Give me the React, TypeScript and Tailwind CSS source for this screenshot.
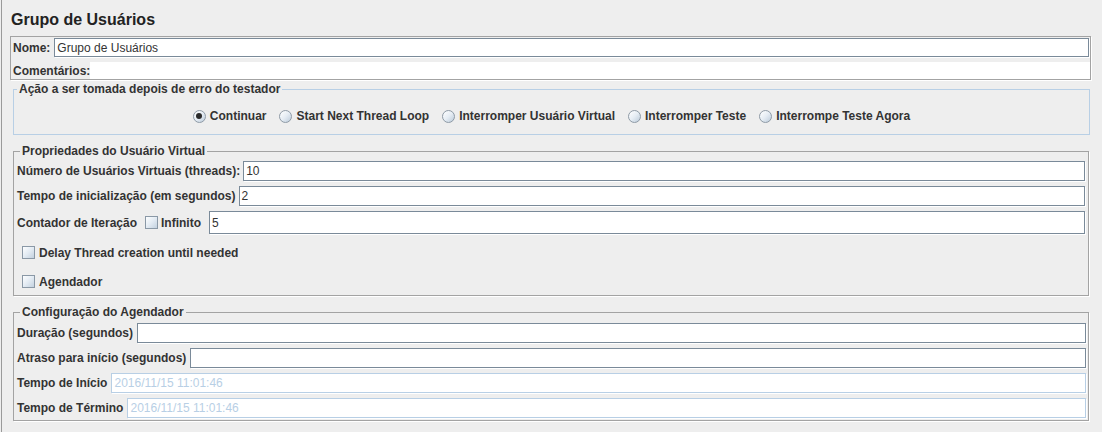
import React from "react";

function Field({ value = "", disabled = false, className = "" }: { value?: string; disabled?: boolean; className?: string }) {
  return (
    <div
      className={
        "flex-1 bg-white border flex items-center pl-[2px] font-normal text-[12px] leading-none " +
        (disabled
          ? "border-[#b8cfe5] text-[#b8cfe5] shadow-[1px_1px_0_#ffffff] "
          : "border-[#7a8a99] text-[#333333] shadow-[1px_1px_0_#ffffff] ") +
        className
      }
    >
      {value}
    </div>
  );
}

function Check() {
  return (
    <div className="w-[13px] h-[13px] shrink-0 border border-[#8a98a6] bg-gradient-to-br from-[#fdfeff] via-[#e3ebf3] to-[#c3d1df]" />
  );
}

function Radio({ checked = false }: { checked?: boolean }) {
  return (
    <div className="w-[13px] h-[13px] shrink-0 rounded-full border border-[#8e9aa6] bg-gradient-to-br from-[#ffffff] via-[#e6edf4] to-[#bccbda] flex items-center justify-center">
      {checked && <div className="w-[6px] h-[6px] rounded-full bg-[#2b2b2b]" />}
    </div>
  );
}

function RadioItem({ label, checked = false }: { label: string; checked?: boolean }) {
  return (
    <div className="flex items-center gap-[4px]">
      <Radio checked={checked} />
      <span>{label}</span>
    </div>
  );
}

function Row({ label, value, disabled = false, h = "h-[20px]", gap = "gap-[3px]" }: { label: React.ReactNode; value?: string; disabled?: boolean; h?: string; gap?: string }) {
  return (
    <div className={"flex items-stretch " + gap + " " + h}>
      <div className="flex items-center whitespace-nowrap">{label}</div>
      <Field value={value} disabled={disabled} />
    </div>
  );
}

export default function App() {
  return (
    <div className="w-[1102px] h-[432px] bg-[#eeeeee] font-['Liberation_Sans',Arial,sans-serif] text-[12px] font-bold text-[#333333] overflow-hidden">
      <div className="h-full ml-[1px] border-l border-[#9a9a9a] pl-[8px] flex flex-col">
        <div className="mt-[10px] ml-[1px] text-[16px] leading-[20px] text-[#222222]">Grupo de Usuários</div>

        <div className="mt-[6px] mr-[11px] border border-[#a3a3a3] shadow-[1px_1px_0_#ffffff] flex flex-col">
          <div className="flex items-stretch h-[20px] pt-[1px] pl-[2px] pr-[1px] gap-[4px]">
            <div className="flex items-center">Nome:</div>
            <Field value="Grupo de Usuários" />
          </div>
          <div className="flex items-stretch h-[17px] mt-[5px] pl-[2px]">
            <div className="flex items-center">Comentários:</div>
            <div className="flex-1 bg-white" />
          </div>
        </div>

        <fieldset className="mt-[2px] ml-[3px] mr-[12px] border border-[#b8cfe5] pb-[10px]">
          <legend className="ml-[3px] px-[2px] leading-[14px]">Ação a ser tomada depois de erro do testador</legend>
          <div className="flex justify-center items-center h-[16px] mt-[12px] gap-[13px]">
            <RadioItem label="Continuar" checked />
            <RadioItem label="Start Next Thread Loop" />
            <RadioItem label="Interromper Usuário Virtual" />
            <RadioItem label="Interromper Teste" />
            <RadioItem label="Interrompe Teste Agora" />
          </div>
        </fieldset>

        <fieldset className="mt-[9px] ml-[3px] mr-[13px] border border-[#a3a3a3] shadow-[1px_1px_0_#ffffff] px-[3px] pb-[2px]">
          <legend className="ml-[3px] px-[2px] leading-[14px]">Propriedades do Usuário Virtual</legend>
          <div className="flex flex-col mt-[3px]">
            <Row label="Número de Usuários Virtuais (threads):" value="10" />
            <div className="mt-[5px]">
              <Row label="Tempo de inicialização (em segundos)" value="2" />
            </div>
            <div className="mt-[5px]">
              <Row
                h="h-[23px]"
                gap="gap-[8px]"
                label={
                  <>
                    <span className="mr-[8px]">Contador de Iteração</span>
                    <Check />
                    <span className="ml-[3px]">Infinito</span>
                  </>
                }
                value="5"
              />
            </div>
            <div className="mt-[7px] h-[23px] flex items-center gap-[4px] pl-[5px]">
              <Check />
              <span>Delay Thread creation until needed</span>
            </div>
            <div className="mt-[6px] h-[23px] flex items-center gap-[4px] pl-[5px]">
              <Check />
              <span>Agendador</span>
            </div>
          </div>
        </fieldset>

        <fieldset className="mt-[9px] ml-[3px] mr-[13px] border border-[#a3a3a3] shadow-[1px_1px_0_#ffffff] pl-[3px] pr-[2px] pb-[2px]">
          <legend className="ml-[3px] px-[2px] leading-[14px]">Configuração do Agendador</legend>
          <div className="flex flex-col mt-[4px] gap-[5px]">
            <Row gap="gap-[4px]" label="Duração (segundos)" />
            <Row gap="gap-[4px]" label="Atraso para início (segundos)" />
            <Row gap="gap-[4px]" label="Tempo de Início" value="2016/11/15 11:01:46" disabled />
            <Row gap="gap-[4px]" label="Tempo de Término" value="2016/11/15 11:01:46" disabled />
          </div>
        </fieldset>
      </div>
    </div>
  );
}
